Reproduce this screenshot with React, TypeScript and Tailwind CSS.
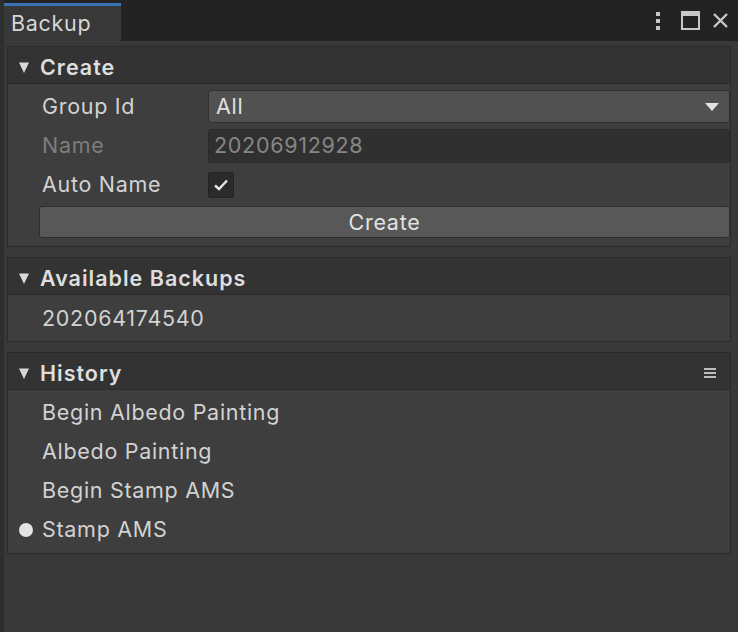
import React from 'react'

const font = { fontFamily: 'Inter, "Noto Sans", sans-serif' }

function Foldout() {
  return (
    <svg width="12" height="13" viewBox="0 0 12 13" className="shrink-0">
      <path d="M1 1.5 L11 1.5 L6 12 Z" fill="#d8d8d8" />
    </svg>
  )
}

function Section({ title, right, children }: { title: string; right?: React.ReactNode; children: React.ReactNode }) {
  return (
    <div className="border border-[#2a2a2a] bg-[#3e3e3e]">
      <div className="flex h-[37px] items-center gap-[10px] border-b border-[#2a2a2a] bg-[#333333] pl-[10px] pr-[14px] pt-[4px]">
        <Foldout />
        <span className="text-[21.5px] font-semibold tracking-[1px] text-[#dedede]">{title}</span>
        <div className="ml-auto">{right}</div>
      </div>
      {children}
    </div>
  )
}

function Row({ label, dim, children }: { label: string; dim?: boolean; children: React.ReactNode }) {
  return (
    <div className="flex h-[39px] items-center">
      <span
        className={`w-[200px] shrink-0 pl-[34px] text-[21.5px] tracking-[0.7px] ${dim ? 'text-[#7d7d7d]' : 'text-[#d2d2d2]'}`}
      >
        {label}
      </span>
      <div className="flex flex-1 items-center">{children}</div>
    </div>
  )
}

const history = ['Begin Albedo Painting', 'Albedo Painting', 'Begin Stamp AMS', 'Stamp AMS']

export default function App() {
  return (
    <div
      className="flex h-[632px] w-[738px] flex-col overflow-hidden border-l-[4px] border-[#2b302c] bg-[#393939]"
      style={font}
    >
      {/* Tab strip */}
      <div className="flex h-[41px] shrink-0 items-end bg-[#232323]">
        <div className="flex h-[38px] w-[117px] items-center border-t-[3px] border-[#3b74b4] bg-[#383838] pl-[7px]">
          <span className="text-[21.5px] tracking-[0.7px] text-[#d6d6d6]">Backup</span>
        </div>
        <div className="ml-auto flex h-full items-center pr-[9px]">
          <svg width="6" height="20" viewBox="0 0 6 20" className="mr-[20px]">
            <rect x="1" y="1" width="4" height="4" fill="#c8c8c8" />
            <rect x="1" y="8" width="4" height="4" fill="#c8c8c8" />
            <rect x="1" y="15" width="4" height="4" fill="#c8c8c8" />
          </svg>
          <svg width="19" height="19" viewBox="0 0 19 19" className="mr-[12px]">
            <rect x="1" y="1" width="17" height="17" fill="none" stroke="#c8c8c8" strokeWidth="2" />
            <rect x="1" y="1" width="17" height="4" fill="#c8c8c8" />
          </svg>
          <svg width="17" height="17" viewBox="0 0 17 17">
            <path d="M2 2 L15 15 M15 2 L2 15" stroke="#c8c8c8" strokeWidth="2.4" />
          </svg>
        </div>
      </div>

      {/* Sections */}
      <div className="flex flex-col gap-[10px] pl-[3px] pr-[7px] pt-[5px]">
        <Section title="Create">
          <div className="pb-[8px] pt-[3px]">
            <Row label="Group Id">
              <div className="flex h-[33px] flex-1 items-center rounded-[3px] border border-[#303030] bg-[#515151] pl-[7px] pr-[10px]">
                <span className="text-[21.5px] tracking-[0.7px] text-[#e0e0e0]">All</span>
                <svg width="14" height="8" viewBox="0 0 14 8" className="ml-auto">
                  <path d="M0 0 L14 0 L7 8 Z" fill="#e4e4e4" />
                </svg>
              </div>
            </Row>
            <Row label="Name" dim>
              <div className="flex h-[34px] flex-1 items-center rounded-[3px] border border-[#2c2c2c] bg-[#303030] pl-[5px]">
                <span className="text-[21.5px] tracking-[0.7px] text-[#868686]">20206912928</span>
              </div>
            </Row>
            <Row label="Auto Name">
              <div className="flex h-[26px] w-[26px] items-center justify-center rounded-[2px] border border-[#232323] bg-[#2b2b2b]">
                <svg width="16" height="14" viewBox="0 0 16 14">
                  <path d="M2 7.5 L6 11 L14 2.5" fill="none" stroke="#e6e6e6" strokeWidth="2.4" />
                </svg>
              </div>
            </Row>
            <div className="pl-[31px]">
              <div className="mt-[2px] flex h-[32px] items-center justify-center rounded-[3px] border border-[#2f2f2f] bg-[#585858]">
                <span className="text-[21.5px] tracking-[0.7px] text-[#e2e2e2]">Create</span>
              </div>
            </div>
          </div>
        </Section>

        <Section title="Available Backups">
          <div className="flex h-[46px] items-center pl-[34px]">
            <span className="text-[21.5px] tracking-[0.7px] text-[#d2d2d2]">202064174540</span>
          </div>
        </Section>

        <Section
          title="History"
          right={
            <svg width="12" height="12" viewBox="0 0 12 12">
              <rect x="0" y="1" width="12" height="2" fill="#bdbdbd" />
              <rect x="0" y="5" width="12" height="2" fill="#bdbdbd" />
              <rect x="0" y="9" width="12" height="2" fill="#bdbdbd" />
            </svg>
          }
        >
          <div className="pb-[4px] pt-[3px]">
            {history.map((h, i) => (
              <div key={h} className="relative flex h-[39px] items-center pl-[34px]">
                {i === history.length - 1 && (
                  <span className="absolute left-[11px] h-[14px] w-[14px] rounded-full bg-[#e4e4e4]" />
                )}
                <span className="text-[21.5px] tracking-[0.7px] text-[#d2d2d2]">{h}</span>
              </div>
            ))}
          </div>
        </Section>
      </div>
    </div>
  )
}
